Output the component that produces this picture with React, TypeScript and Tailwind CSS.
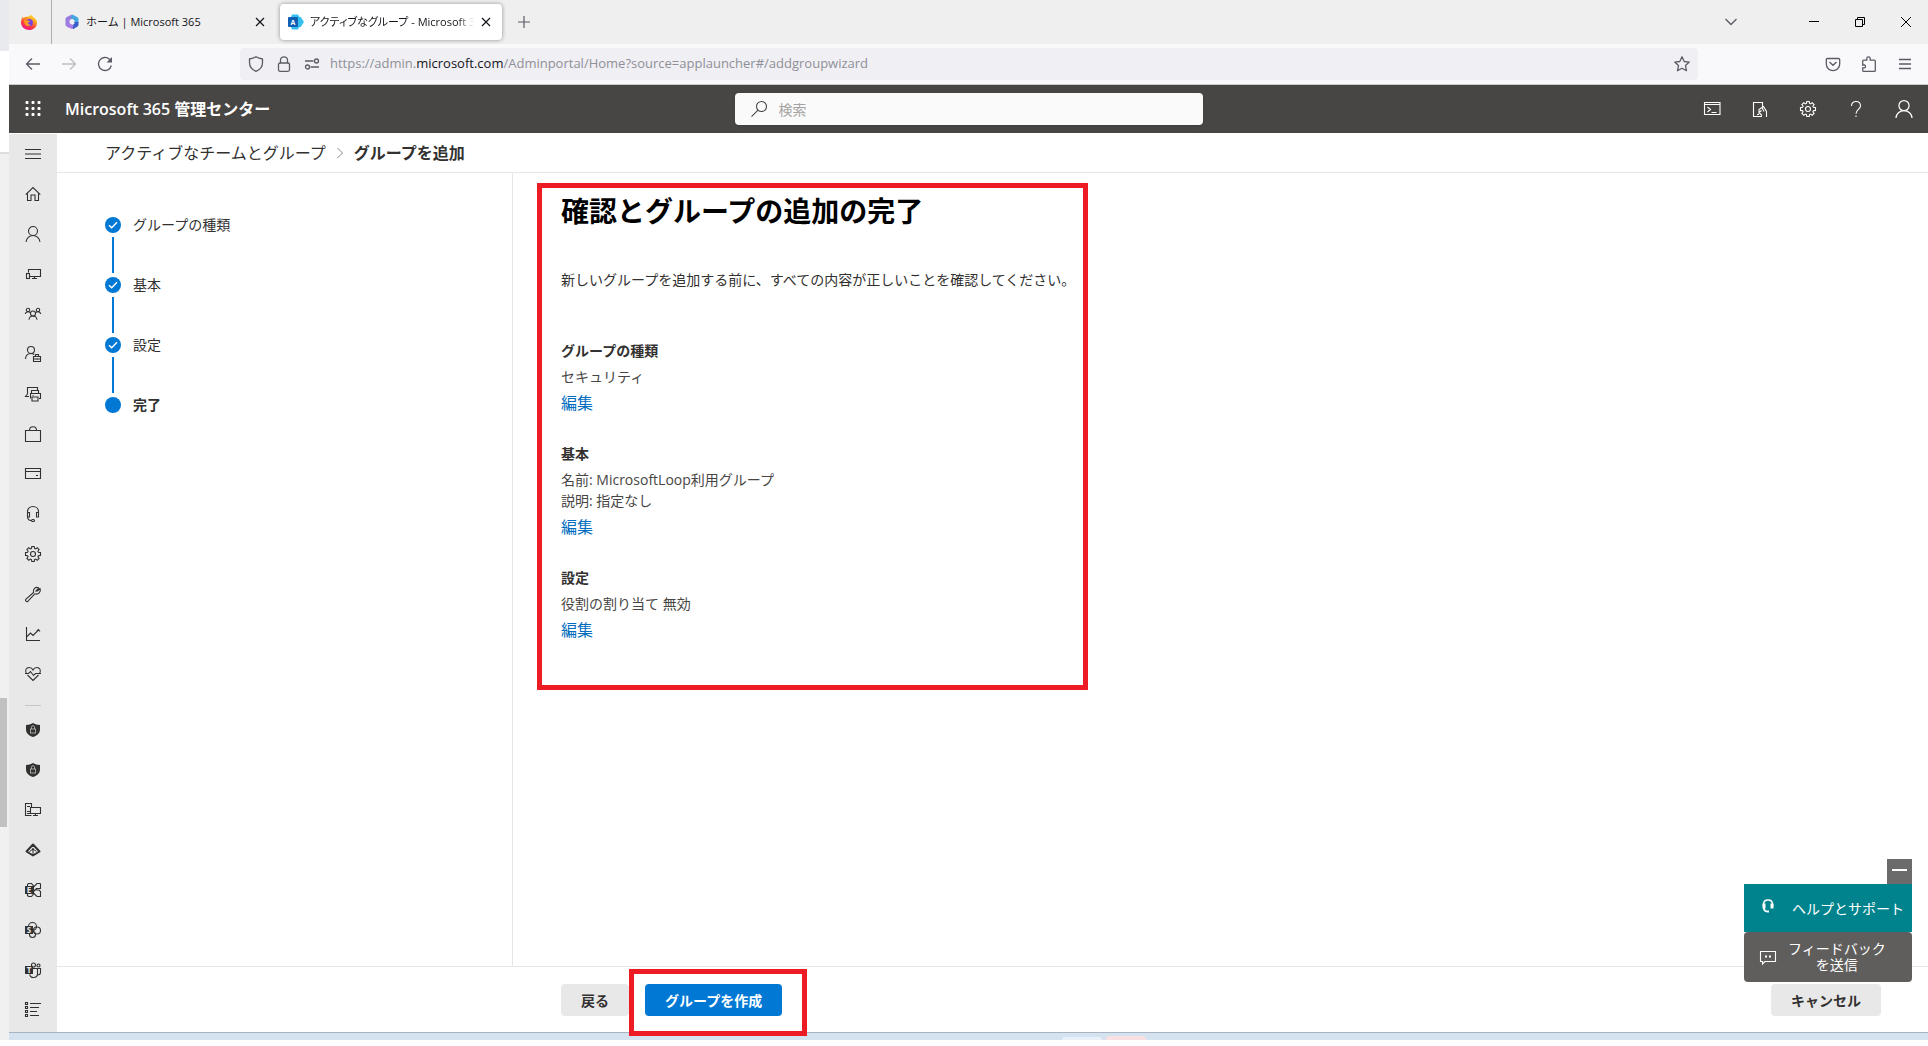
import { FC, ReactNode } from 'react';

type IconProps = { children: ReactNode; size?: 16 | 18; sw?: number };

// 16x16 グリッドの線画アイコン
const Icon: FC<IconProps> = ({ children, size = 16, sw = 1.1 }) => (
  <svg
    width={size}
    height={size}
    viewBox="0 0 16 16"
    fill="none"
    stroke="currentColor"
    strokeWidth={sw}
    className="shrink-0 overflow-visible"
    aria-hidden="true"
  >
    {children}
  </svg>
);

const Badge: FC<{ letter: string }> = ({ letter }) => (
  <>
    <rect x="0" y="4" width="8" height="8" fill="currentColor" stroke="none" />
    <text x="4" y="10.8" textAnchor="middle" fontSize="8" fontWeight="700" fill="#e8e8e8" stroke="none">
      {letter}
    </text>
  </>
);

const gearPath =
  'M6.8.5h2.4l.3 1.9 1.1.5 1.6-1.2 1.9 1.9-1.2 1.6.5 1.1 2.1.3v2.8l-2.1.3-.5 1.1 1.2 1.6-1.9 1.9-1.6-1.2-1.1.5-.3 1.9H6.8l-.3-1.9-1.1-.5-1.6 1.2-1.9-1.9 1.2-1.6-.5-1.1L.5 9.4V6.6l2.1-.3.5-1.1-1.2-1.6 1.9-1.9 1.6 1.2 1.1-.5z';

const Gear = () => (
  <Icon>
    <path d={gearPath} />
    <circle cx="8" cy="8" r="2.5" />
  </Icon>
);

const Person = () => (
  <Icon>
    <circle cx="8" cy="5" r="4.5" />
    <path d="M1 16c.3-3.8 3.3-6.5 7-6.5s6.700 2.700 7 6.500" />
  </Icon>
);

const ShieldLock = () => (
  <Icon>
    <path d="M8 1c2 1.300 4.400 1.900 7 2v4.500c0 3.500-2.700 6-7 7.500-4.300-1.500-7-4-7-7.500V3c2.600-.1 5-.7 7-2z" fill="currentColor" stroke="none" />
    <rect x="5.500" y="7" width="5" height="4" stroke="#b8c4bc" strokeWidth=".8" />
    <path d="M6.500 7V5.200a1.500 1.500 0 0 1 3 0V7" stroke="#b8c4bc" strokeWidth=".8" />
  </Icon>
);

const navItems: { label: string; icon: ReactNode }[] = [
  { label: 'メニュー', icon: <Icon><path d="M0 3.500h16M0 8h16M0 12.500h16" /></Icon> },
  { label: 'ホーム', icon: <Icon><path d="M.7 8.700 8 1.500l7.300 7.200M2.500 7.500v7h3.500V9h4v5.500h3.500v-7" /></Icon> },
  { label: 'ユーザー', icon: <Person /> },
  { label: 'デバイス', icon: <Icon><path d="M3.500 6.500v-3h12v7H5M9.500 10.500v2M7 12.500h5" /><rect x="1.500" y="7.500" width="3" height="5" /></Icon> },
  {
    label: 'チームとグループ',
    icon: (
      <Icon>
        <circle cx="3" cy="4" r="1.700" />
        <circle cx="13" cy="4" r="1.700" />
        <circle cx="8" cy="7.500" r="2.500" />
        <path d="M.3 8c.3-1.500 1.200-2.300 2.700-2.300 1.300 0 2 .6 2.500 1.300M15.700 8c-.3-1.500-1.200-2.300-2.700-2.300-1.300 0-2 .6-2.500 1.300M4 13.800C4.300 11.500 5.700 10 8 10s3.700 1.500 4 3.800" />
      </Icon>
    ),
  },
  {
    label: '役割',
    icon: (
      <Icon>
        <circle cx="6" cy="4" r="3.500" />
        <path d="M.5 13c.2-3.200 2.400-5.500 5.500-5.500 1.300 0 2.300.4 3.200 1" />
        <path d="M8.500 10.500h7v5h-7zM10.500 10.500v-2h3v2M8.500 13h7M12 12.300v1.500" />
      </Icon>
    ),
  },
  { label: 'リソース', icon: <Icon><path d="M2.500 8V1.500h10V4M4 10.500H.5L2.500 8M6.500 7.500V4.500h7v3M5.500 12.500v-5h10v5H14M7 11h6v4H7zM7.500 9.500h1" /></Icon> },
  { label: 'マーケットプレース', icon: <Icon><path d="M.5 4.500h15v11H.5zM4.500 4.500C4.500 2 5.500.8 8 .8s3.500 1.200 3.500 3.700" /></Icon> },
  { label: '課金情報', icon: <Icon><path d="M.5 2.500h15v10H.5zM.5 5.500h15M11 9.500h2" /></Icon> },
  { label: 'サポート', icon: <Icon><path d="M2.500 7V5.500C2.500 2.500 5 .5 8 .5s5.500 2 5.500 5V7M2.500 6.500h2v4.500h-2zM11.500 6.500h2v4.500h-2zM2.700 11c0 2.200 1.300 3.500 3.500 3.500" /><rect x="6.500" y="13.500" width="3" height="2" rx="1" /></Icon> },
  { label: '設定', icon: <Gear /> },
  { label: 'セットアップ', icon: <Icon><path d="M11 5 13.800 2.200c-1.200-1-3-1-4.300.1C8.300 3.500 8 5 8.500 6.500L1 13.200c-.7.800-.6 1.500 0 2s1.300.5 2 0L9.800 7.800c1.700.6 3.300.2 4.400-1 1.200-1.200 1.400-2.800.9-4.200L12.500 5z" /></Icon> },
  { label: 'レポート', icon: <Icon><path d="M1.500 1v13.500H15M1.500 11l4-4 2.500 2.500 5.500-5.500M15 5.500 13.500 3.500 11.800 5" /></Icon> },
  { label: '正常性', icon: <Icon><path d="M1.300 7.500C-.2 4.500 1 1.500 4.200 1.500 6 1.500 7.300 2.500 8 4c.7-1.500 2-2.500 3.800-2.500 3.200 0 4.400 3 2.900 6M2.500 9 8 14.500 13.500 9M0 7.500h3.500L5.500 5.500 8.500 9.500l2-2H16" /></Icon> },
];

const adminCenters: { label: string; icon: ReactNode }[] = [
  { label: 'セキュリティ', icon: <ShieldLock /> },
  { label: 'コンプライアンス', icon: <ShieldLock /> },
  { label: 'エンドポイント', icon: <Icon><path d="M6.500 13.500h-6v-12h6v4M5.500 5.500h10v6h-10zM10.500 11.500v2M8 13.500h5M2 4.500h3M2 9.500h3M2 11.500h3" /></Icon> },
  {
    label: 'ID',
    icon: (
      <Icon sw={2}>
        <path d="M8 2.500 14.500 9.500 8 13.500 1.500 9.500z" strokeLinejoin="round" />
        <path d="M8 6v7M4.500 9.500 8 7l3.500 2.500" strokeWidth="1" />
        <circle cx="8" cy="7.500" r="1" fill="currentColor" stroke="none" />
      </Icon>
    ),
  },
  {
    label: 'Exchange',
    icon: (
      <Icon>
        <path d="M2.500 4V2.500l1-1h3l2 2.500v8l-2 2.500h-3l-1-1V12M15.500 1.500h-3.500L8.500 5v3M15.500 1.500v5h-4L8.500 9.500M8.500 11l3.500 3.500h3.500V9.500l-1.500-1.500h-4" />
        <Badge letter="E" />
      </Icon>
    ),
  },
  { label: 'SharePoint', icon: <Icon><circle cx="7.500" cy="4.500" r="4" /><circle cx="12" cy="8.500" r="3.500" /><circle cx="7.500" cy="12.500" r="3" /><Badge letter="S" /></Icon> },
  { label: 'Teams', icon: <Icon><circle cx="8.500" cy="3" r="2" /><circle cx="13.500" cy="3.500" r="1.500" /><path d="M8 6.500h4.500v5c0 2.300-1.500 4-4 4-2 0-3.500-1.200-3.800-3.200M12.500 6.500h3v4c0 1.500-1.200 2.500-3 2.500" /><Badge letter="T" /></Icon> },
  { label: 'すべての管理センター', icon: <Icon><path d="M5 1.500h11M5 5.500h9M5 9.500h7M5 13.500h9M.5.500h2v2h-2zM.5 4.500h2v2h-2zM.5 8.500h2v2h-2zM.5 12.500h2v2h-2z" /></Icon> },
];

const steps = [
  { name: 'グループの種類', done: true },
  { name: '基本', done: true },
  { name: '設定', done: true },
  { name: '完了', done: false },
];

const sections = [
  { title: 'グループの種類', lines: ['セキュリティ'] },
  { title: '基本', lines: ['名前: MicrosoftLoop利用グループ', '説明: 指定なし'] },
  { title: '設定', lines: ['役割の割り当て 無効'] },
];

const FirefoxLogo = () => (
  <svg width="16" height="16" viewBox="0 0 16 16" aria-hidden="true">
    <defs>
      <linearGradient id="fx" x1=".8" y1="0" x2=".3" y2="1">
        <stop offset="0" stopColor="#fff04a" />
        <stop offset=".35" stopColor="#ffa51f" />
        <stop offset=".7" stopColor="#ff3b3f" />
        <stop offset="1" stopColor="#e8128c" />
      </linearGradient>
    </defs>
    <path d="M10 0c.3 1.500 1.200 2 2.300 3C14.500 4.500 16 6 16 8.700 16 13 12.500 16 8.200 16S0 13 0 8.500c0-2.200.6-4 2-5.700l.5 1.400C3.500 3 4.500 2.500 6 2.700 7.500 2.800 9.500 2 10 0z" fill="url(#fx)" />
    <circle cx="8.300" cy="8.700" r="3.600" fill="#7542e5" />
    <path d="M3 6.500c1.500-.9 3.200-.7 4.500.2l1.700.3c-.3 1-1.200 1.200-2 1.400-.5 1.400.8 2.700 2.600 2.100-1.300 2.300-5 2-6-.5C3.300 9 3 7.800 3 6.500z" fill="#ff9a1f" />
  </svg>
);

const M365Logo = () => (
  <svg width="16" height="16" viewBox="0 0 16 16" fill="none" strokeWidth="4" strokeLinejoin="round" aria-hidden="true">
    <path d="M8.500 2.200 3.500 5v5.500L6 12" stroke="#9a7be0" />
    <path d="M7.500 2.200 12.500 5v4" stroke="#45a5e0" />
    <path d="M12.500 8v2.800L8 13.600" stroke="#3a5cc9" />
    <path d="M8.800 13.300 3.800 10.700" stroke="#a87be8" />
  </svg>
);

const AdminLogo = () => (
  <svg width="16" height="16" viewBox="0 0 16 16" aria-hidden="true">
    <path d="M4 .5h6l1 2 2 .8 1.200 2L16 8l-1.800 2.700-1.200 2-2 .8-1 2H4L3 13V3z" fill="#35c0f0" />
    <rect x="0" y="3" width="10" height="10" rx="1" fill="#0f5fb3" />
    <text x="5" y="10.500" textAnchor="middle" fontSize="7" fontWeight="700" fill="#fff">A</text>
  </svg>
);

const TabClose = () => (
  <svg width="10" height="10" viewBox="0 0 10 10" stroke="currentColor" strokeWidth="1.200" aria-hidden="true">
    <path d="M1 1l8 8M9 1 1 9" />
  </svg>
);

const iconButton = 'flex shrink-0 items-center justify-center';

const TabBar = () => (
  <div className="flex h-11 items-center bg-[#efefef] text-[#15141a]">
    <button className={`${iconButton} h-11 w-[43px] border-r border-[#aeaeae] pr-0.5`} aria-label="Firefox View">
      <FirefoxLogo />
    </button>
    <div className="flex h-9 w-[228px] items-center gap-[6px] pl-3">
      <M365Logo />
      <span className="flex-1 whitespace-nowrap text-[11px]">ホーム | Microsoft 365</span>
      <button className={`${iconButton} h-6 w-6 mr-2`} aria-label="タブを閉じる"><TabClose /></button>
    </div>
    <div className="flex h-9 w-[222px] items-center rounded bg-white pl-2 shadow-[0_0_4px_rgba(0,0,0,0.4)]">
      <AdminLogo />
      <span className="ml-[6px] flex-1 overflow-hidden whitespace-nowrap text-[11px] [font-feature-settings:'palt'] [mask-image:linear-gradient(to_left,transparent,black_16px)]">
        アクティブなグループ - Microsoft 365
      </span>
      <button className={`${iconButton} mr-1 h-6 w-6`} aria-label="タブを閉じる"><TabClose /></button>
    </div>
    <button className={`${iconButton} ml-1 h-9 w-9 text-[#5b5b66]`} aria-label="新しいタブ">
      <svg width="12" height="12" viewBox="0 0 12 12" stroke="currentColor" strokeWidth="1.200"><path d="M6 0v12M0 6h12" /></svg>
    </button>
    <div className="ml-auto flex text-black">
      <button className={`${iconButton} mr-9 h-11 w-[48px] text-[#5b5b66]`} aria-label="タブを一覧表示">
        <svg width="12" height="8" viewBox="0 0 12 8" fill="none" stroke="currentColor" strokeWidth="1.300"><path d="M.5 1 6 6.500 11.500 1" /></svg>
      </button>
      <button className={`${iconButton} h-11 w-[46px]`} aria-label="最小化">
        <svg width="10" height="10" viewBox="0 0 10 10" stroke="currentColor"><path d="M0 4.500h10" /></svg>
      </button>
      <button className={`${iconButton} h-11 w-[46px]`} aria-label="元に戻す">
        <svg width="10" height="10" viewBox="0 0 10 10" fill="none" stroke="currentColor"><path d="M.5 2.500h7v7h-7zM2.500 2.500v-2h7v7h-2" /></svg>
      </button>
      <button className={`${iconButton} h-11 w-[45px]`} aria-label="閉じる">
        <svg width="10" height="10" viewBox="0 0 10 10" stroke="currentColor"><path d="M0 0l10 10M10 0 0 10" /></svg>
      </button>
    </div>
  </div>
);

const Toolbar = () => (
  <div className="flex h-[41px] items-center border-b border-[#cccccc] bg-[#f9f9fb] pl-1.5 text-[#5b5b66]">
    <button className={`${iconButton} h-8 w-9`} aria-label="戻る"><Icon sw={1.3}><path d="M15 8H1.500M7 2.500 1.500 8 7 13.500" /></Icon></button>
    <button className={`${iconButton} h-8 w-9 text-[#bdbdc3]`} aria-label="進む"><Icon sw={1.3}><path d="M1 8h13.500M9 2.500 14.500 8 9 13.500" /></Icon></button>
    <button className={`${iconButton} h-8 w-9`} aria-label="再読み込み">
      <Icon sw={1.3}><path d="M14.300 9.500A6.500 6.500 0 1 1 12.500 3.300L14 5" /><path d="M15 1v5.500H9.500z" fill="currentColor" stroke="none" /></Icon>
    </button>
    <div className="ml-[117px] flex h-8 flex-1 items-center rounded bg-[#f0f0f4] pl-2">
      <span className="flex gap-3">
        <Icon sw={1.3}><path d="M8 .8c1.900 1.200 4.100 1.900 6.500 2.200v3.500c0 4-2.500 7.300-6.500 8.800-4-1.500-6.500-4.800-6.500-8.800V3C3.900 2.700 6.100 2 8 .8z" /></Icon>
        <Icon sw={1.3}><rect x="2.500" y="7" width="11" height="8.300" rx="1.500" /><path d="M4.500 7V4.300a3.500 3.500 0 0 1 7 0V7" /></Icon>
        <Icon sw={1.3}><path d="M1 5h8.500M6.500 11H15" /><circle cx="12.500" cy="5" r="2" /><circle cx="3.500" cy="11" r="2" /></Icon>
      </span>
      <span className="ml-[10px] flex-1 whitespace-nowrap text-[13px] text-[#8f8f98]">
        https://admin.<span className="text-[#15141a]">microsoft.com</span>/Adminportal/Home?source=applauncher#/addgroupwizard
      </span>
      <button className={`${iconButton} h-8 w-8`} aria-label="ブックマーク">
        <Icon sw={1.3}><path d="m8 .8 2.200 4.700 5.100.6-3.800 3.500 1 5.100L8 12.200l-4.500 2.500 1-5.100L.7 6.100l5.100-.6z" strokeLinejoin="round" /></Icon>
      </button>
    </div>
    <div className="ml-[117px] flex pr-[5px]">
      <button className={`${iconButton} h-8 w-9`} aria-label="Pocket"><Icon sw={1.3}><path d="M2.500 2.500h11c.8 0 1.200.4 1.200 1.200V8a6.700 6.700 0 0 1-13.400 0V3.700c0-.8.4-1.200 1.200-1.200zM4.500 6 8 9.300 11.500 6" /></Icon></button>
      <button className={`${iconButton} h-8 w-9`} aria-label="拡張機能"><Icon sw={1.3}><path d="M1.700 9V5c0-.6.300-.9.900-.9h3.200V2.500a1.700 1.700 0 0 1 3.400 0v1.600h4.200c.6 0 .9.300.9.900v9.400c0 .6-.3.900-.9.900H2.600c-.6 0-.9-.3-.9-.9v-2.600h2a1.600 1.600 0 0 0 0-2.800z" /></Icon></button>
      <button className={`${iconButton} h-8 w-9`} aria-label="メニュー"><Icon sw={1.3}><path d="M2 3.500h12M2 8h12M2 12.500h12" /></Icon></button>
    </div>
  </div>
);

const Header = () => (
  <header className="relative flex h-12 items-center justify-between bg-[#484644] text-white">
    <div className="flex items-center">
      <button className={`${iconButton} h-12 w-12`} aria-label="アプリ起動ツール">
        <svg width="16" height="16" viewBox="0 0 16 16" fill="currentColor">
          {[0, 6, 12].map((y) => [0, 6, 12].map((x) => <rect key={`${x}${y}`} x={x + 0.5} y={y} width="3" height="3" rx="1" />))}
        </svg>
      </button>
      <span className="ml-2 whitespace-nowrap text-[16px] font-semibold">Microsoft 365 管理センター</span>
    </div>
    {/* 検索ボックス */}
    <label className="absolute left-1/2 flex h-8 w-[468px] -translate-x-1/2 items-center gap-3 rounded bg-[#fafafa] pl-4 text-[#484644] shadow">
      <Icon><circle cx="10.500" cy="5.500" r="5" /><path d="M7 9.200.5 15.700" /></Icon>
      <input type="text" placeholder="検索" className="flex-1 bg-transparent text-[14px] outline-none placeholder:text-[#a6a4a2]" />
    </label>
    <div className="flex">
      <button className={`${iconButton} h-12 w-12`} aria-label="Cloud Shell"><Icon><path d="M.5 1.500h15.500v12H.5zM.5 3.500h15.500M3.500 6l3 2.500-3 2.500M7.500 11.500h5" /></Icon></button>
      <button className={`${iconButton} h-12 w-12`} aria-label="モバイル"><Icon><path d="M10.500 5.500v-4h-9v14h8.500M5 13.500h2M14.500 16v-5.500L11.500 5.500 10 6.500l2 4M10 6.500 7 8.500v3l2.500-2M7 11.500l3 3" /></Icon></button>
      <button className={`${iconButton} h-12 w-12`} aria-label="設定"><Gear /></button>
      <button className={`${iconButton} h-12 w-12`} aria-label="ヘルプ"><Icon><path d="M3.500 5C3.500 2.200 5.300.5 8 .5s4.500 1.600 4.500 4.200c0 3.700-4.500 3.800-4.500 8M8 14.500V16" /></Icon></button>
      <button className={`${iconButton} h-12 w-12`} aria-label="アカウント"><Icon size={18}><circle cx="8" cy="5" r="4.500" /><path d="M.8 16c.3-3.800 3.300-6.500 7.200-6.500s6.900 2.700 7.200 6.500" /></Icon></button>
    </div>
  </header>
);

const SideNav = () => (
  <nav className="mt-px flex w-12 shrink-0 flex-col bg-[#e8e8e8] text-[#323130]">
    {navItems.map((item) => (
      <button key={item.label} className={`${iconButton} h-10 w-12`} aria-label={item.label}>{item.icon}</button>
    ))}
    <hr className="mx-4 mt-[11px] mb-1 border-[#c8c6c4]" />
    {adminCenters.map((item) => (
      <button key={item.label} className={`${iconButton} h-10 w-12`} aria-label={item.label}>{item.icon}</button>
    ))}
  </nav>
);

const StepList = () => (
  <ol className="w-[456px] shrink-0 border-r border-[#e6e6e6] pt-[44px] pl-12 text-[14px] text-[#323130]">
    {steps.map((step, i) => (
      <li key={step.name} className="flex h-[60px] gap-3">
        <span className="flex w-4 flex-col items-center gap-1">
          <span className="flex h-4 w-4 items-center justify-center rounded-full bg-[#0078d4]">
            {step.done && (
              <svg width="10" height="8" viewBox="0 0 10 8" fill="none" stroke="#fff" strokeWidth="1.400"><path d="M1 4.200 3.700 6.800 9 1.200" /></svg>
            )}
          </span>
          {i < steps.length - 1 && <span className="h-9 w-0.5 bg-[#0078d4]" />}
        </span>
        <span className={step.done ? 'leading-4' : 'leading-4 font-semibold'}>{step.name}</span>
      </li>
    ))}
  </ol>
);

const Review = () => (
  <section className="mt-[10px] ml-6 h-[507px] w-[551px] border-5 border-[#ed1c24] pt-2 pl-[19px] text-[14px] text-[#323130]">
    <h1 className="text-[28px] leading-[30px] font-bold whitespace-nowrap text-black">確認とグループの追加の完了</h1>
    <p className="mt-[44px] leading-5 whitespace-nowrap">新しいグループを追加する前に、すべての内容が正しいことを確認してください。</p>
    <div className="mt-[50px] flex flex-col gap-[28px]">
      {sections.map((s) => (
        <div key={s.title}>
          <h2 className="mb-1 leading-[22px] font-semibold">{s.title}</h2>
          {s.lines.map((line) => (
            <p key={line} className="leading-[21px] text-[#484644]">{line}</p>
          ))}
          <a href="#edit" className="mt-1 block w-max text-[16px] leading-6 text-[#006cbe]">編集</a>
        </div>
      ))}
    </div>
  </section>
);

const HelpWidget = () => (
  <div className="absolute right-4 bottom-16 flex w-[168px] flex-col items-end text-[14px] text-white">
    <button className="flex h-[25px] w-[25px] items-center justify-center bg-[#6b6b6b]" aria-label="最小化">
      <span className="mb-1 h-0.5 w-[15px] bg-white" />
    </button>
    <button className="flex h-12 w-full items-center bg-[#00838c] pl-4 whitespace-nowrap">
      <svg width="16" height="16" viewBox="0 0 16 16" fill="none" stroke="currentColor" className="mb-1">
        <path d="M3.500 8.500v-2C3.500 3.500 5.200 2 8 2s4.500 1.500 4.500 4.500v2" strokeWidth="1.500" />
        <path d="M4 5.500v5M12 5.500v5" strokeWidth="3" />
        <path d="M4 10c0 2.500 1 3.500 3.500 3.500h1.500" strokeWidth="1.800" />
      </svg>
      <span className="ml-4">ヘルプとサポート</span>
    </button>
    <button className="flex h-[50px] w-full items-center rounded-sm bg-[#605e5c] pl-4">
      <Icon><path d="M.5 2.500h15v10H5L2.500 15v-2.500h-2z" /><path d="M5 6.500h2v2H5zM9 6.500h2v2H9z" fill="currentColor" stroke="none" /></Icon>
      <span className="ml-3 text-center leading-4">フィードバック<br />を送信</span>
    </button>
  </div>
);

export default function App() {
  return (
    <div className="relative flex min-h-screen bg-white pb-1.5 font-['Open_Sans','Noto_Sans_CJK_JP',sans-serif]">
      {/* 背後のウィンドウの左端 */}
      <div className="flex w-[9px] shrink-0 flex-col bg-[#f0f0f0]">
        <div className="h-[51px] bg-[#e8eaed]" />
        <div className="h-[103px] border-b-2 border-[#dddddd] bg-white" />
        <div className="mt-[544px] h-[129px] w-[7px] bg-[#c1c1c1]" />
      </div>

      <div className="flex min-w-0 flex-1 flex-col">
        <TabBar />
        <Toolbar />
        <Header />
        <div className="flex flex-1">
          <SideNav />
          <div className="flex min-w-0 flex-1 flex-col">
            <nav className="flex h-10 items-center gap-[10px] border-b border-[#e6e6e6] pl-12 text-[16px] whitespace-nowrap text-[#323130]">
              <a href="#groups">アクティブなチームとグループ</a>
              <svg width="8" height="12" viewBox="0 0 8 12" fill="none" stroke="#8a8886"><path d="M1.500 1l5 5-5 5" /></svg>
              <span className="font-semibold">グループを追加</span>
            </nav>
            <main className="flex flex-1">
              <StepList />
              <Review />
            </main>
            <footer className="flex h-[66px] items-start border-t border-[#e6e6e6] pt-[17px] pr-[47px] pl-[504px] text-[14px] font-semibold text-[#323130]">
              <button className="h-8 rounded-sm bg-[#e8e8e8] px-5">戻る</button>
              <div className="relative ml-4">
                <button className="h-8 rounded-sm bg-[#0078d4] px-5 text-white">グループを作成</button>
                <span className="pointer-events-none absolute -top-[15px] -right-[25px] -bottom-5 -left-4 z-10 border-5 border-[#ed1c24]" />
              </div>
              <button className="ml-auto h-8 rounded-sm bg-[#e8e8e8] px-5">キャンセル</button>
            </footer>
          </div>
        </div>
        {/* タスクバー */}
        <div className="flex h-2 items-end gap-1 border-t border-[#a9b4c0] bg-[#d5e2f0] pl-[1053px]">
          <span className="h-[3px] w-10 rounded-t-sm bg-[#eaf0f8]" />
          <span className="h-1 w-10 rounded-t-sm bg-[#fbe0e3]" />
        </div>
      </div>

      <HelpWidget />
    </div>
  );
}
